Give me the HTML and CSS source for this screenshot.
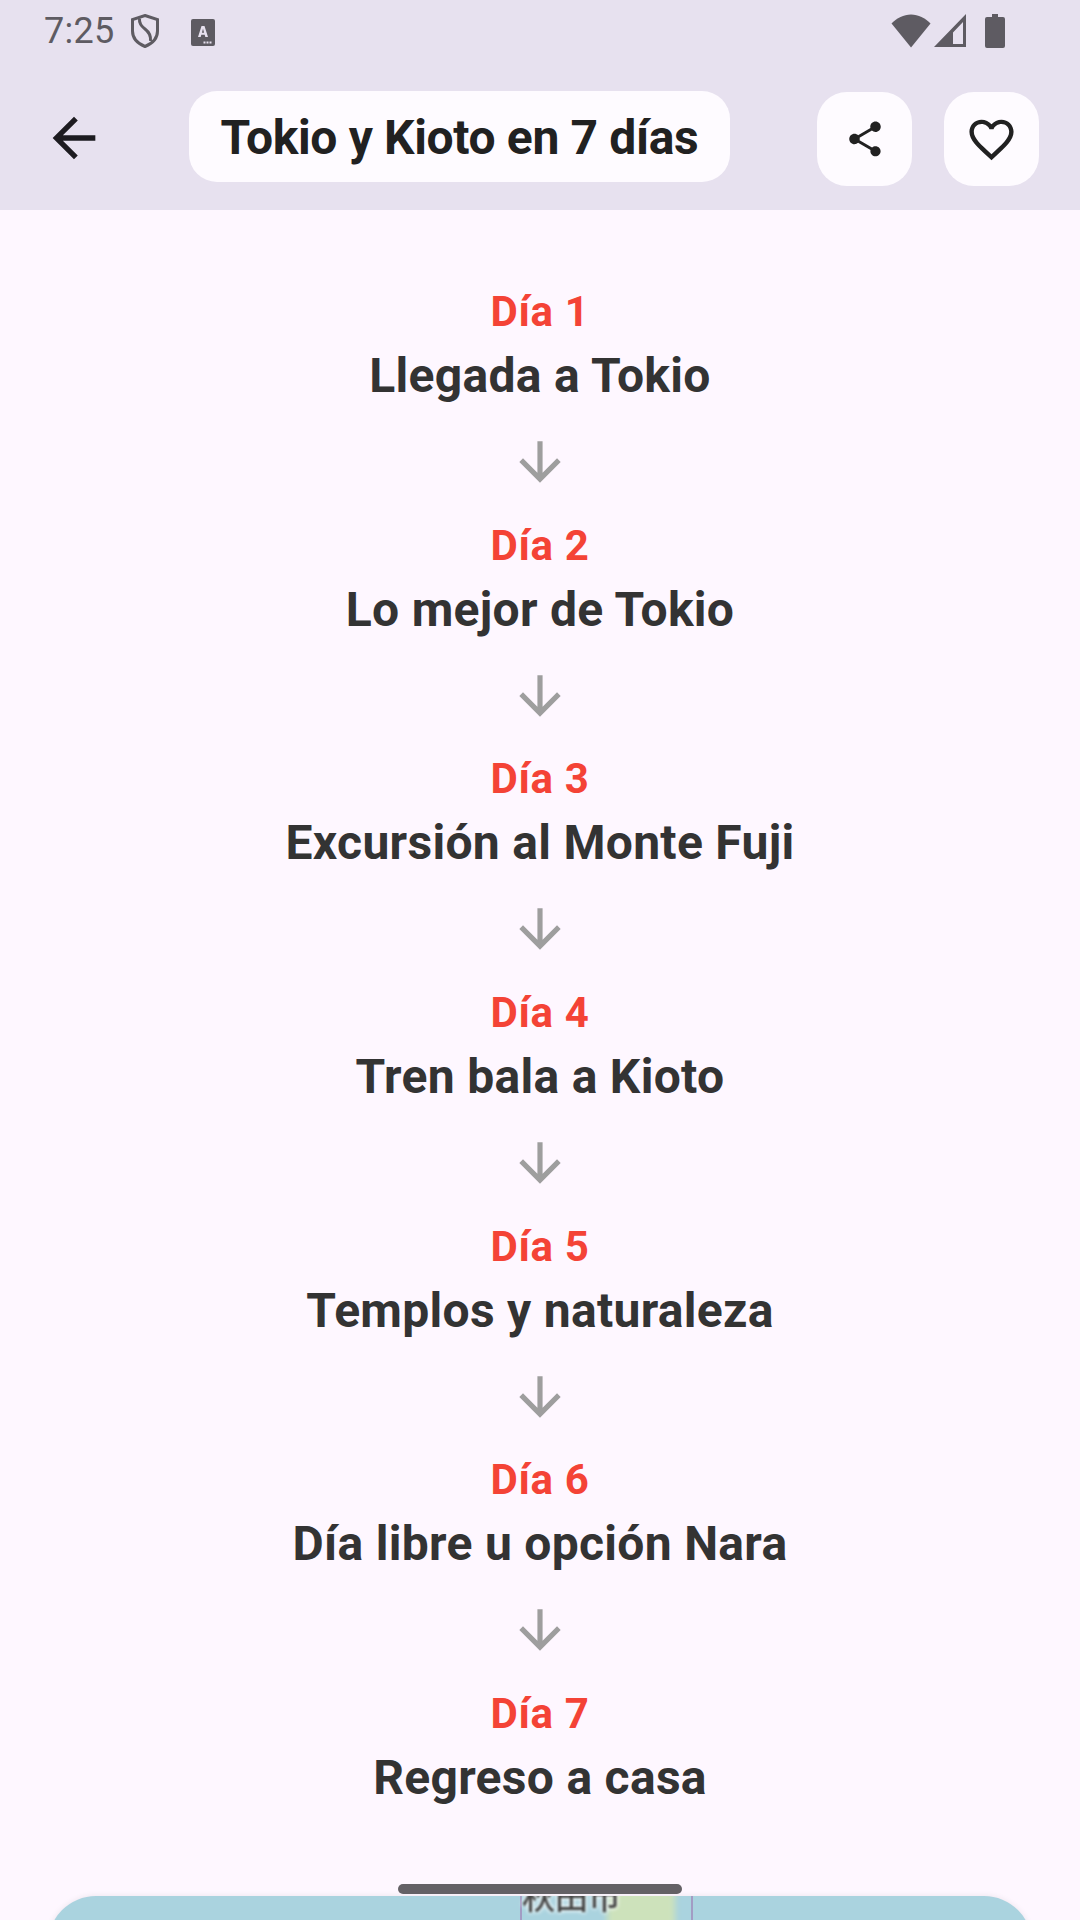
FILE: index.html
```html
<!DOCTYPE html>
<html lang="es">
<head>
<meta charset="utf-8">
<title>Tokio y Kioto en 7 días</title>
<link rel="stylesheet" href="styles.css">
</head>
<body>
<div class="screen">
  <header class="header">
    <div class="status">
      <div class="status-left">
        <span class="time">7:25</span>
        <svg class="shield" viewBox="0 0 28 34"><path d="M14 1.500 26.500 5.500V17c0 7-5 12.500-12.500 15.500C6.500 29.500 1.500 24 1.500 17V5.500Z" fill="none" stroke="currentColor" stroke-width="3"/><path d="M8.500 4.500C8 9 10 12 14 15s6 6.500 5.500 12" fill="none" stroke="currentColor" stroke-width="3"/></svg>
        <svg class="a-box" viewBox="0 0 24 27"><rect width="24" height="27" rx="2" fill="currentColor"/><path d="M7 18 10.500 7h3L17 18h-2.700l-.6-2.200h-3.400L9.700 18ZM10.900 13.700h2.200L12 9.800Z" fill="#e7e1ef"/><path d="M12.500 22.500h2v2h-2zM15.500 22.500h2v2h-2zM18.500 22.500h2v2h-2z" fill="#e7e1ef"/></svg>
      </div>
      <div class="status-right">
        <svg class="wifi" viewBox="0 0 40 34"><path d="M20 33.500 .5 9.500C6 4 12.500 .5 20 .5s14 3.500 19.500 9Z" fill="currentColor"/></svg>
        <svg class="signal" viewBox="0 0 32 33"><path fill-rule="evenodd" d="M32 0V33H0ZM29 8 19 18.500V30H29Z" fill="currentColor"/></svg>
        <svg class="battery" viewBox="0 0 20 34"><path d="M7 0h6v3h5a2 2 0 0 1 2 2v27a2 2 0 0 1-2 2H2a2 2 0 0 1-2-2V5a2 2 0 0 1 2-2h5Z" fill="currentColor"/></svg>
      </div>
    </div>
    <div class="toolbar">
      <button class="back" type="button" aria-label="Volver">
        <svg class="back-icon" viewBox="0 0 24 24"><path d="M20 11H7.830l5.590-5.590L12 4l-8 8 8 8 1.410-1.410L7.830 13H20v-2z"/></svg>
      </button>
      <h1 class="title">Tokio y Kioto en 7 días</h1>
      <div class="actions">
        <button class="action" type="button" aria-label="Compartir">
          <svg class="share-icon" viewBox="0 0 24 24"><path d="M18 16.080c-.76 0-1.440.3-1.960.77L8.910 12.700c.05-.23.09-.46.09-.7s-.04-.47-.09-.7l7.050-4.110c.54.5 1.250.81 2.040.81 1.660 0 3-1.340 3-3s-1.340-3-3-3-3 1.340-3 3c0 .24.04.47.09.7L8.040 9.810C7.500 9.310 6.790 9 6 9c-1.660 0-3 1.340-3 3s1.340 3 3 3c.79 0 1.500-.31 2.040-.81l7.120 4.160c-.05.21-.08.43-.08.65 0 1.610 1.310 2.920 2.920 2.920s2.920-1.310 2.920-2.920-1.310-2.920-2.920-2.920z"/></svg>
        </button>
        <button class="action" type="button" aria-label="Favorito">
          <svg class="heart-icon" viewBox="0 0 24 24"><path d="M16.500 3c-1.740 0-3.410.81-4.500 2.090C10.910 3.810 9.240 3 7.500 3 4.420 3 2 5.420 2 8.500c0 3.780 3.400 6.860 8.550 11.540L12 21.350l1.450-1.320C18.600 15.360 22 12.280 22 8.500 22 5.420 19.580 3 16.500 3zm-4.400 15.550l-.1.1-.1-.1C7.140 14.240 4 11.390 4 8.500 4 6.500 5.500 5 7.500 5c1.540 0 3.040.99 3.570 2.360h1.870C13.460 5.990 14.960 5 16.500 5c2 0 3.500 1.500 3.500 3.500 0 2.890-3.140 5.740-7.900 10.050z"/></svg>
        </button>
      </div>
    </div>
  </header>

  <main class="itinerary">
    <section class="day"><div class="day-label">Día 1</div><div class="day-name">Llegada a Tokio</div></section>
    <svg class="arrow" viewBox="0 0 24 24"><path d="M20 12l-1.410-1.410L13 16.170V4h-2v12.170l-5.580-5.590L4 12l8 8 8-8z"/></svg>
    <section class="day"><div class="day-label">Día 2</div><div class="day-name">Lo mejor de Tokio</div></section>
    <svg class="arrow" viewBox="0 0 24 24"><path d="M20 12l-1.410-1.410L13 16.170V4h-2v12.170l-5.580-5.590L4 12l8 8 8-8z"/></svg>
    <section class="day"><div class="day-label">Día 3</div><div class="day-name">Excursión al Monte Fuji</div></section>
    <svg class="arrow" viewBox="0 0 24 24"><path d="M20 12l-1.410-1.410L13 16.170V4h-2v12.170l-5.580-5.590L4 12l8 8 8-8z"/></svg>
    <section class="day"><div class="day-label">Día 4</div><div class="day-name">Tren bala a Kioto</div></section>
    <svg class="arrow" viewBox="0 0 24 24"><path d="M20 12l-1.410-1.410L13 16.170V4h-2v12.170l-5.580-5.590L4 12l8 8 8-8z"/></svg>
    <section class="day"><div class="day-label">Día 5</div><div class="day-name">Templos y naturaleza</div></section>
    <svg class="arrow" viewBox="0 0 24 24"><path d="M20 12l-1.410-1.410L13 16.170V4h-2v12.170l-5.580-5.590L4 12l8 8 8-8z"/></svg>
    <section class="day"><div class="day-label">Día 6</div><div class="day-name">Día libre u opción Nara</div></section>
    <svg class="arrow" viewBox="0 0 24 24"><path d="M20 12l-1.410-1.410L13 16.170V4h-2v12.170l-5.580-5.590L4 12l8 8 8-8z"/></svg>
    <section class="day"><div class="day-label">Día 7</div><div class="day-name">Regreso a casa</div></section>

    <div class="map">
      <div class="map-land"></div>
      <div class="map-line map-line-a"></div>
      <div class="map-line map-line-b"></div>
      <span class="map-city">秋田市</span>
    </div>
  </main>
  <div class="home-bar"></div>
</div>
</body>
</html>
```
FILE: styles.css
```css
* { box-sizing: border-box; }
html, body { margin: 0; padding: 0; }
body { width: 1080px; height: 1920px; overflow: hidden; background: #fef7ff; font-family: Roboto, "Noto Sans CJK JP", sans-serif; }
.screen { position: relative; width: 1080px; height: 1920px; overflow: hidden; }

.header { height: 210px; background: #e7e1ef; }
.status { height: 64px; display: flex; justify-content: space-between; align-items: flex-start; padding: 14px 75px 0 44px; color: #5e5b62; }
.status-left { display: flex; align-items: center; height: 34px; }
.status-right { display: flex; align-items: flex-start; }
.time { font-size: 36px; line-height: 34px; letter-spacing: 0.3px; margin-right: 16px; }
.shield { width: 28px; height: 34px; }
.a-box { width: 24px; height: 27px; margin: 2px 0 0 32px; }
.wifi { width: 40px; height: 34px; }
.signal { width: 32px; height: 33px; margin-left: 3px; }
.battery { width: 20px; height: 34px; margin-left: 19px; }

.toolbar { height: 146px; display: flex; align-items: center; padding-left: 42px; }
.back { width: 64px; height: 64px; padding: 0; border: 0; background: none; display: flex; align-items: center; justify-content: center; margin-top: 2px; }
.back-icon { width: 64px; height: 64px; fill: #1d1b20; flex: none; }
.title { margin: -1px 0 0 83px; padding-top: 2px; width: 541px; height: 91px; background: #fefbff; border-radius: 28px; display: flex; align-items: center; justify-content: center; font-size: 48px; letter-spacing: -0.35px; font-weight: 700; color: #212121; white-space: nowrap; }
.actions { display: flex; gap: 31.500px; margin-left: 87px; margin-top: 4px; }
.action { width: 95px; height: 94px; padding: 0; border: 0; background: #fefbff; border-radius: 30px; display: flex; align-items: center; justify-content: center; }
.share-icon { width: 42px; height: 42px; fill: #212121; }
.heart-icon { width: 53px; height: 53px; fill: #212121; }

.itinerary { display: flex; flex-direction: column; align-items: center; padding-top: 77px; }
.day { display: flex; flex-direction: column; align-items: center; }
.day-label { font-size: 42px; letter-spacing: 0.66px; line-height: 50px; font-weight: 700; color: #f44336; }
.day-name { margin-top: 8px; font-size: 48px; letter-spacing: 0.3px; line-height: 62px; font-weight: 700; color: #333333; white-space: nowrap; }
.arrow { width: 62px; height: 62px; margin: 24px 0 27.700px; fill: #9e9e9e; flex: none; }

.map { position: relative; flex: none; width: 984px; height: 300px; margin-top: 87px; background: #aad3df; border-radius: 48px 48px 0 0; overflow: hidden; box-shadow: 0 0 6px rgba(0, 0, 0, .08); }
.map-land { position: absolute; left: 559px; top: -6px; width: 68px; height: 60px; background: #cde2bb; filter: blur(3px); }
.map-line { position: absolute; top: 0; width: 2px; height: 60px; background: #a29cc4; filter: blur(.6px); }
.map-line-a { left: 472px; }
.map-line-b { left: 643px; }
.map-city { position: absolute; left: 474px; top: -19px; font-size: 33px; line-height: 36px; font-weight: 500; color: #444; text-shadow: 0 0 4px #fff, 0 0 4px #fff; filter: blur(.8px); font-family: "Noto Sans CJK JP", sans-serif; white-space: nowrap; }

.home-bar { position: absolute; left: 398px; top: 1884px; width: 284px; height: 10px; border-radius: 5px; background: #646166; }
```
